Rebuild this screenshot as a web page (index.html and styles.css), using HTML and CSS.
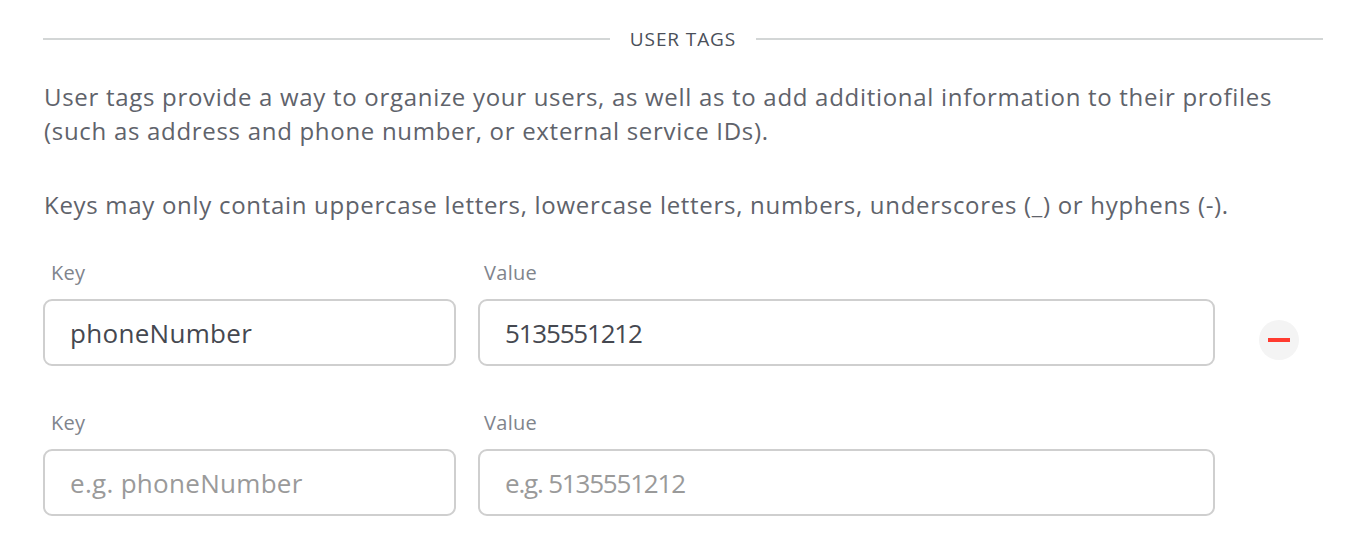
FILE: index.html
```html
<!DOCTYPE html>
<html>
<head>
<meta charset="utf-8">
<link rel="stylesheet" href="styles.css">
</head>
<body>
<section class="tags">
  <div class="divider">
    <span class="rule"></span>
    <span class="divider-title">USER TAGS</span>
    <span class="rule"></span>
  </div>
  <p class="desc">User tags provide a way to organize your users, as well as to add additional information to their profiles (such as address and phone number, or external service IDs).</p>
  <p class="desc second">Keys may only contain uppercase letters, lowercase letters, numbers, underscores (_) or hyphens (-).</p>

  <div class="tag-row">
    <div class="field key">
      <label class="label">Key</label>
      <input class="input" type="text" value="phoneNumber">
    </div>
    <div class="field value">
      <label class="label">Value</label>
      <input class="input numeric" type="text" value="5135551212">
    </div>
    <div class="action">
      <button class="remove" type="button" aria-label="Remove"><span class="bar"></span></button>
    </div>
  </div>

  <div class="tag-row">
    <div class="field key">
      <label class="label">Key</label>
      <input class="input" type="text" placeholder="e.g. phoneNumber">
    </div>
    <div class="field value">
      <label class="label">Value</label>
      <input class="input numeric" type="text" placeholder="e.g. 5135551212">
    </div>
    <div class="action"></div>
  </div>
</section>
</body>
</html>
```
FILE: styles.css
```css
* { box-sizing: border-box; }
html, body { margin: 0; padding: 0; background: #fff; }
body {
  font-family: "Open Sans", "Noto Sans", sans-serif;
  color: #5f636b;
}
.tags {
  width: 1280px;
  margin-left: 43px;
  padding-top: 27px;
}
.divider {
  display: flex;
  align-items: center;
  gap: 20px;
  height: 24px;
}
.rule {
  flex: 1;
  height: 2px;
  background: #d3d6d6;
}
.divider-title {
  font-size: 19px;
  color: #4a4f59;
  letter-spacing: 0.9px;
  line-height: 24px;
}
.desc {
  margin: 29px 0 0 1px;
  font-size: 24px;
  letter-spacing: 0.7px;
  line-height: 34px;
  color: #5f636b;
}
.desc.second { margin-top: 40px; }
.tag-row {
  display: flex;
  gap: 22px;
  margin-top: 39px;
}
.tag-row + .tag-row { margin-top: 45px; }
.field { display: flex; flex-direction: column; }
.field.key { width: 413px; }
.field.value { width: 737px; }
.label {
  font-size: 20px;
  letter-spacing: 0.3px;
  line-height: 24px;
  color: #80848c;
  padding-left: 8px;
  margin-bottom: 14px;
}
.field.value .label { padding-left: 6px; }
.input {
  height: 67px;
  width: 100%;
  border: 2px solid #cfcfcf;
  border-radius: 9px;
  padding: 0 25px;
  font-family: inherit;
  font-size: 26px;
  letter-spacing: 0.3px;
  color: #454850;
  background: #fff;
  outline: none;
}
.input.numeric { letter-spacing: -1.2px; }
.input::placeholder { color: #9a9a9a; }
.action {
  flex: 1;
  display: flex;
  align-items: flex-end;
  padding-left: 22px;
}
.remove {
  width: 40px;
  height: 40px;
  margin-bottom: 6px;
  border: none;
  border-radius: 50%;
  background: #f4f4f4;
  display: flex;
  align-items: center;
  justify-content: center;
  padding: 0;
  cursor: pointer;
}
.bar {
  display: block;
  width: 22px;
  height: 4px;
  background: #ff3b30;
}
```
